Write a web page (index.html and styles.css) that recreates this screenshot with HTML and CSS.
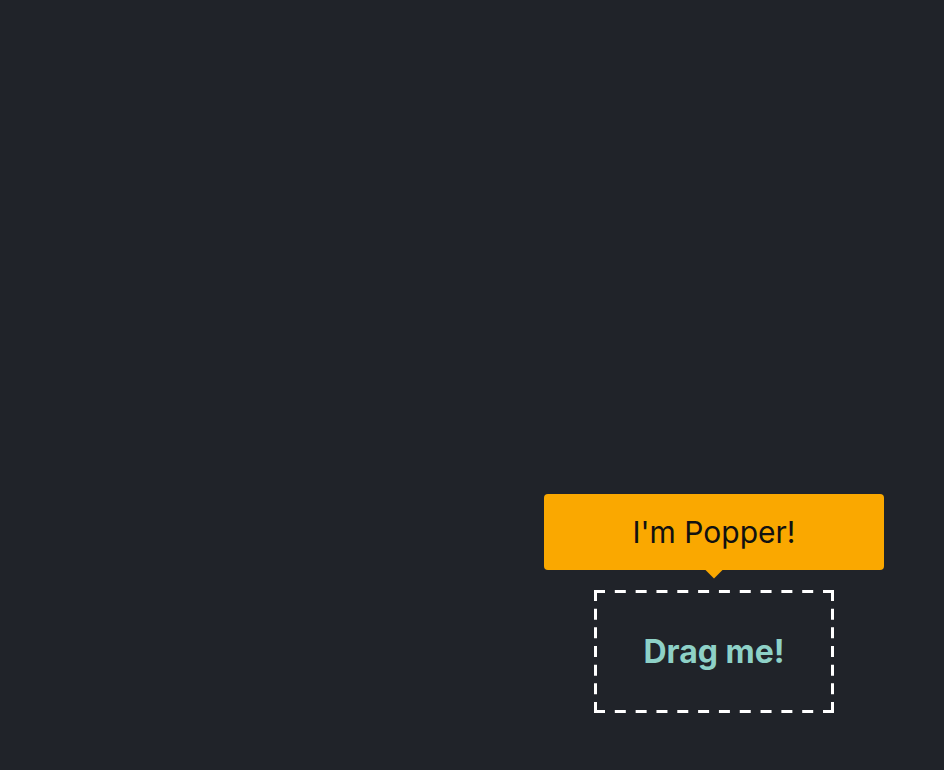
FILE: index.html
```html
<!DOCTYPE html>
<html lang="en">
<head>
<meta charset="utf-8">
<title>Popper</title>
<link rel="stylesheet" href="styles.css">
</head>
<body>
<main class="canvas">
  <div class="drag-area">
    <div class="tooltip" role="tooltip">I'm Popper!<span class="arrow"></span></div>
    <div class="drag-box">
      <svg class="dash-frame" width="240" height="123" viewBox="0 0 240 123" aria-hidden="true">
        <line x1="0" y1="1.5" x2="240" y2="1.5" stroke-dasharray="11 9.82"/>
        <line x1="0" y1="121.5" x2="240" y2="121.5" stroke-dasharray="11 9.82"/>
        <line x1="1.5" y1="0" x2="1.5" y2="123" stroke-dasharray="11 7.67"/>
        <line x1="238.5" y1="0" x2="238.5" y2="123" stroke-dasharray="11 7.67"/>
      </svg>
      <span class="drag-label">Drag me!</span>
    </div>
  </div>
</main>
</body>
</html>
```
FILE: styles.css
```css
html, body {
  margin: 0;
  padding: 0;
  height: 100%;
  background: #202329;
}
.canvas {
  position: relative;
  width: 944px;
  height: 770px;
  overflow: hidden;
  font-family: Inter, "Noto Sans", sans-serif;
}
.drag-area {
  position: absolute;
  left: 594px;
  top: 590px;
}
.drag-box {
  position: relative;
  width: 240px;
  height: 123px;
  display: flex;
  align-items: center;
  justify-content: center;
  color: #8ed1c7;
  font-weight: 700;
  font-size: 32px;
  cursor: grab;
}
.dash-frame {
  position: absolute;
  left: 0;
  top: 0;
  pointer-events: none;
}
.dash-frame line {
  stroke: #ffffff;
  stroke-width: 3;
}
.drag-label {
  position: relative;
}
.tooltip {
  position: absolute;
  left: -50px;
  top: -96px;
  box-sizing: border-box;
  width: 340px;
  height: 76px;
  background: #faa800;
  border-radius: 4px;
  color: #111;
  font-size: 30px;
  display: flex;
  align-items: center;
  justify-content: center;
}
.arrow {
  position: absolute;
  left: 164px;
  bottom: -6px;
  width: 12px;
  height: 12px;
  background: #faa800;
  transform: rotate(45deg);
}
```
